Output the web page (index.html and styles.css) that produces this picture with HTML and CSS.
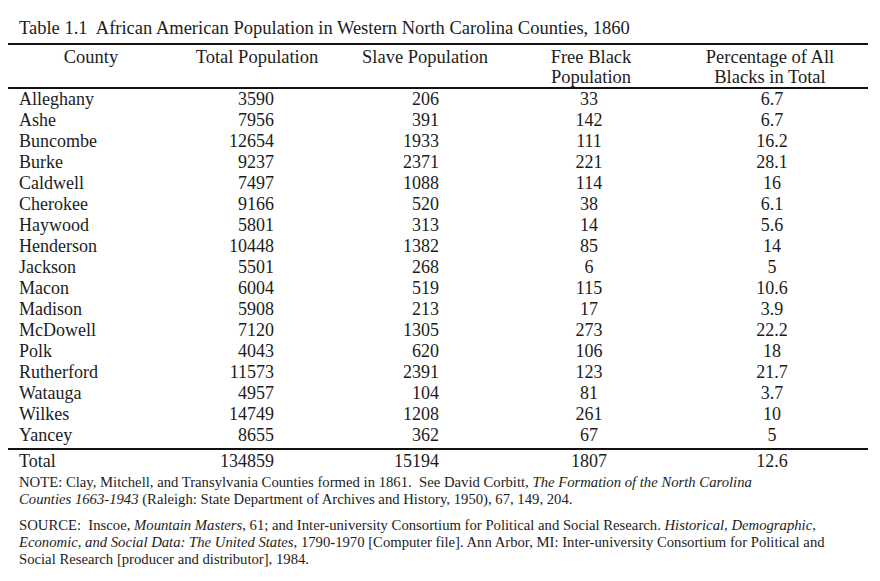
FILE: index.html
```html
<!DOCTYPE html>
<html lang="en">
<head>
<meta charset="utf-8">
<title>Table 1.1</title>
<link rel="stylesheet" href="styles.css">
</head>
<body>
<div class="page">
  <div class="caption">Table 1.1&nbsp; African American Population in Western North Carolina Counties, 1860</div>
  <table class="data">
    <colgroup>
      <col class="c1"><col class="c2"><col class="c3"><col class="c4"><col class="c5">
    </colgroup>
    <thead>
      <tr>
        <th>County</th>
        <th>Total Population</th>
        <th>Slave Population</th>
        <th>Free Black<br>Population</th>
        <th>Percentage of All<br>Blacks in Total</th>
      </tr>
    </thead>
    <tbody>
      <tr><td class="name">Alleghany</td><td class="tot">3590</td><td class="sl">206</td><td class="fb">33</td><td class="pc">6.7</td></tr>
      <tr><td class="name">Ashe</td><td class="tot">7956</td><td class="sl">391</td><td class="fb">142</td><td class="pc">6.7</td></tr>
      <tr><td class="name">Buncombe</td><td class="tot">12654</td><td class="sl">1933</td><td class="fb">111</td><td class="pc">16.2</td></tr>
      <tr><td class="name">Burke</td><td class="tot">9237</td><td class="sl">2371</td><td class="fb">221</td><td class="pc">28.1</td></tr>
      <tr><td class="name">Caldwell</td><td class="tot">7497</td><td class="sl">1088</td><td class="fb">114</td><td class="pc">16</td></tr>
      <tr><td class="name">Cherokee</td><td class="tot">9166</td><td class="sl">520</td><td class="fb">38</td><td class="pc">6.1</td></tr>
      <tr><td class="name">Haywood</td><td class="tot">5801</td><td class="sl">313</td><td class="fb">14</td><td class="pc">5.6</td></tr>
      <tr><td class="name">Henderson</td><td class="tot">10448</td><td class="sl">1382</td><td class="fb">85</td><td class="pc">14</td></tr>
      <tr><td class="name">Jackson</td><td class="tot">5501</td><td class="sl">268</td><td class="fb">6</td><td class="pc">5</td></tr>
      <tr><td class="name">Macon</td><td class="tot">6004</td><td class="sl">519</td><td class="fb">115</td><td class="pc">10.6</td></tr>
      <tr><td class="name">Madison</td><td class="tot">5908</td><td class="sl">213</td><td class="fb">17</td><td class="pc">3.9</td></tr>
      <tr><td class="name">McDowell</td><td class="tot">7120</td><td class="sl">1305</td><td class="fb">273</td><td class="pc">22.2</td></tr>
      <tr><td class="name">Polk</td><td class="tot">4043</td><td class="sl">620</td><td class="fb">106</td><td class="pc">18</td></tr>
      <tr><td class="name">Rutherford</td><td class="tot">11573</td><td class="sl">2391</td><td class="fb">123</td><td class="pc">21.7</td></tr>
      <tr><td class="name">Watauga</td><td class="tot">4957</td><td class="sl">104</td><td class="fb">81</td><td class="pc">3.7</td></tr>
      <tr><td class="name">Wilkes</td><td class="tot">14749</td><td class="sl">1208</td><td class="fb">261</td><td class="pc">10</td></tr>
      <tr class="last"><td class="name">Yancey</td><td class="tot">8655</td><td class="sl">362</td><td class="fb">67</td><td class="pc">5</td></tr>
    </tbody>
    <tfoot>
      <tr><td class="name">Total</td><td class="tot">134859</td><td class="sl">15194</td><td class="fb">1807</td><td class="pc">12.6</td></tr>
    </tfoot>
  </table>
  <p class="note">NOTE: Clay, Mitchell, and Transylvania Counties formed in 1861.&nbsp; See David Corbitt, <i>The Formation of the North Carolina<br>Counties 1663-1943</i> (Raleigh: State Department of Archives and History, 1950), 67, 149, 204.</p>
  <p class="note source">SOURCE:&nbsp; Inscoe, <i>Mountain Masters</i>, 61; and Inter-university Consortium for Political and Social Research. <i>Historical, Demographic,<br>Economic, and Social Data: The United States</i>, 1790-1970 [Computer file]. Ann Arbor, MI: Inter-university Consortium for Political and<br>Social Research [producer and distributor], 1984.</p>
</div>
</body>
</html>
```

FILE: styles.css
```css
html, body {
  margin: 0;
  padding: 0;
  background: #ffffff;
}

body {
  padding: 8px;
  font-family: "Liberation Serif", "Times New Roman", serif;
  color: #1c1c1c;
}

.page {
  width: 860px;
}

.caption {
  font-size: 18.5px;
  line-height: 20px;
  padding: 10px 0 5px 11px;
}

.data {
  width: 860px;
  border-collapse: collapse;
  table-layout: fixed;
  font-size: 18px;
  border-top: 2px solid #111;
}

.c1 { width: 166px; }
.c2 { width: 166px; }
.c3 { width: 170px; }
.c4 { width: 162px; }
.c5 { width: 196px; }

.data th {
  font-weight: normal;
  font-size: 18.5px;
  text-align: center;
  vertical-align: top;
  line-height: 20px;
  padding: 2px 0 0 0;
  height: 40px;
  border-bottom: 2px solid #111;
}

.data td {
  padding: 0;
  height: 21px;
  line-height: 21px;
  white-space: nowrap;
}

.data tr.last td {
  padding-bottom: 2px;
}

.data tfoot td {
  border-top: 2px solid #111;
  padding-top: 1px;
}

.name {
  text-align: left;
  padding-left: 11px !important;
}

.tot {
  text-align: right;
  padding-right: 66px !important;
}

.sl {
  text-align: right;
  padding-right: 71px !important;
}

.fb {
  text-align: center;
  padding-right: 4px !important;
}

.pc {
  text-align: center;
  padding-left: 4px !important;
}

.note {
  margin: 2px 0 0 0;
  padding-left: 11px;
  font-size: 14.7px;
  line-height: 17px;
  white-space: nowrap;
}

.note.source {
  margin-top: 9px;
}
```
